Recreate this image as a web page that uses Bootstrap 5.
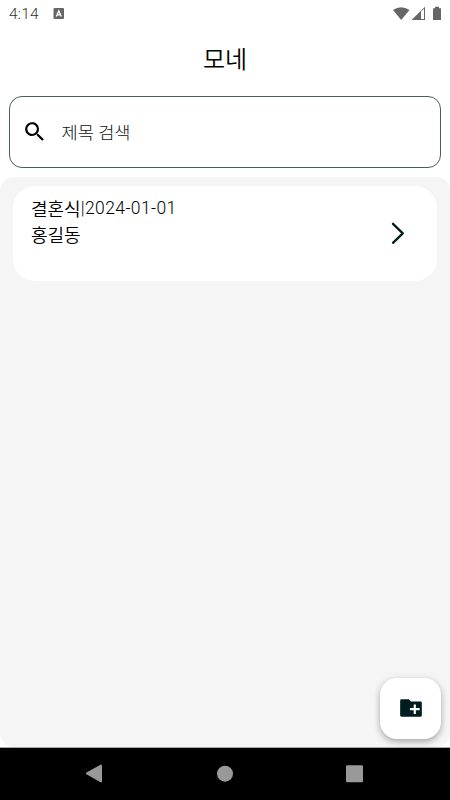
<!DOCTYPE html>
<html lang="ko">
<head>
<meta charset="utf-8">
<meta name="viewport" content="width=device-width, initial-scale=1">
<title>모네</title>
<link href="https://cdn.jsdelivr.net/npm/bootstrap@5.3.0/dist/css/bootstrap.min.css" rel="stylesheet">
<style>
body{font-family:Roboto,"Noto Sans CJK KR",sans-serif;color:#000;height:800px;overflow:hidden}
svg{display:block;flex:none}
.status-bar{height:28px;padding:0 8px 0 9px}
.clock{font-size:15.5px;line-height:28px;font-weight:300;color:#333;width:44px;letter-spacing:.15px}
.title-bar{height:68px}
.title-text{font-size:24px;line-height:32px;font-weight:350;margin:16px 0 0;letter-spacing:-.2px}
.search-box{height:72px;margin:0 9px;border:1px solid #48605c;border-radius:13px;padding-left:12px}
.search-text{font-size:17.6px;line-height:26px;font-weight:300;color:#111;margin:1px 0 0 14px}
.list-panel{margin-top:9px;background:#f5f5f5;border-radius:14px;padding:8.5px 13px}
.entry{height:95.5px;border-radius:22px;padding:10px 27px 0 18px}
.entry-line{font-size:18px;line-height:27px;height:26.5px;font-weight:350}
.entry-date{font-size:17.5px;letter-spacing:.4px;font-weight:350;position:relative;top:-2px}
.entry-arrow{margin-top:25px}
.fab{right:9px;bottom:8.5px;width:61px;height:61px;border-radius:17px;box-shadow:0 3px 6px rgba(0,0,0,.26),0 1px 8px rgba(0,0,0,.08)}
.system-nav{height:53px;border-top:1px solid #a8a8a8}
</style>
</head>
<body class="d-flex flex-column bg-white">
<header class="status-bar d-flex align-items-center">
  <span class="clock">4:14</span>
  <svg width="12" height="12" viewBox="0 0 12 12"><rect x=".5" y="0" width="10.5" height="11" rx="1" fill="#666"/><path d="M3.3 8.5 5.8 3l2.5 5.5M4.3 6.9h3" fill="none" stroke="#fff" stroke-width="1.4"/></svg>
  <svg class="ms-auto" width="50" height="16" viewBox="0 0 50 16"><path d="M1 3.9Q9 -1.5 17.5 3.9L9.2 14Z" fill="#666"/><path d="M19.500 14 33 .8V14Z" fill="#666"/><path d="M29 5.300 32 3V13H29Z" fill="#fff"/><path d="M43 .7h4v1.600h2V14h-8V2.300h2Z" fill="#666"/></svg>
</header>
<div class="title-bar d-flex justify-content-center"><h1 class="title-text">모네</h1></div>
<main class="d-flex flex-column flex-grow-1 position-relative">
  <div class="search-box d-flex align-items-center">
    <svg width="25.5" height="25.5" viewBox="0 0 24 24"><path d="M15.5 14h-.8l-.3-.3A6.5 6.5 0 1 0 13.7 14.4l.3.3v.8l5 5 1.5-1.5zm-6 0a4.5 4.5 0 1 1 0-9 4.5 4.5 0 0 1 0 9z" fill="#000"/></svg>
    <span class="search-text">제목 검색</span>
  </div>
  <section class="list-panel flex-grow-1">
    <article class="entry bg-white d-flex justify-content-between">
      <div><div class="entry-line">결혼식<span class="entry-date">|2024-01-01</span></div><div class="entry-line">홍길동</div></div>
      <svg class="entry-arrow" width="20" height="24" viewBox="0 0 20 24"><path d="m3 2.8 9.8 9.500L3 21.800" fill="none" stroke="#001f20" stroke-width="2.300" stroke-linecap="round" stroke-linejoin="round"/></svg>
    </article>
  </section>
  <button class="fab position-absolute bg-white border-0 p-0 d-flex align-items-center justify-content-center" aria-label="폴더 추가">
    <svg width="26" height="26" viewBox="0 0 24 24"><path d="M20.500 6H12l-2-2H3.500A1.300 1.300 0 0 0 2 5.300v13.400A1.300 1.300 0 0 0 3.500 20h17a1.300 1.300 0 0 0 1.500-1.300V7.300A1.300 1.300 0 0 0 20.500 6zM20 14h-3.500v3.500h-2V14H11v-2h3.500V8.800h2V12H20z" fill="#001c20"/></svg>
  </button>
</main>
<nav class="system-nav bg-black">
  <svg width="450" height="52" viewBox="0 0 450 52" fill="#999"><path d="M86 24.800 101 16.500Q102 16.500 102 17.500V33.500Q102 34.500 101 34.500L86 26Z"/><circle cx="225" cy="25.700" r="8"/><rect x="346" y="17.300" width="17" height="17" rx="1.200"/></svg>
</nav>
<script src="https://cdn.jsdelivr.net/npm/bootstrap@5.3.0/dist/js/bootstrap.bundle.min.js"></script>
</body>
</html>
